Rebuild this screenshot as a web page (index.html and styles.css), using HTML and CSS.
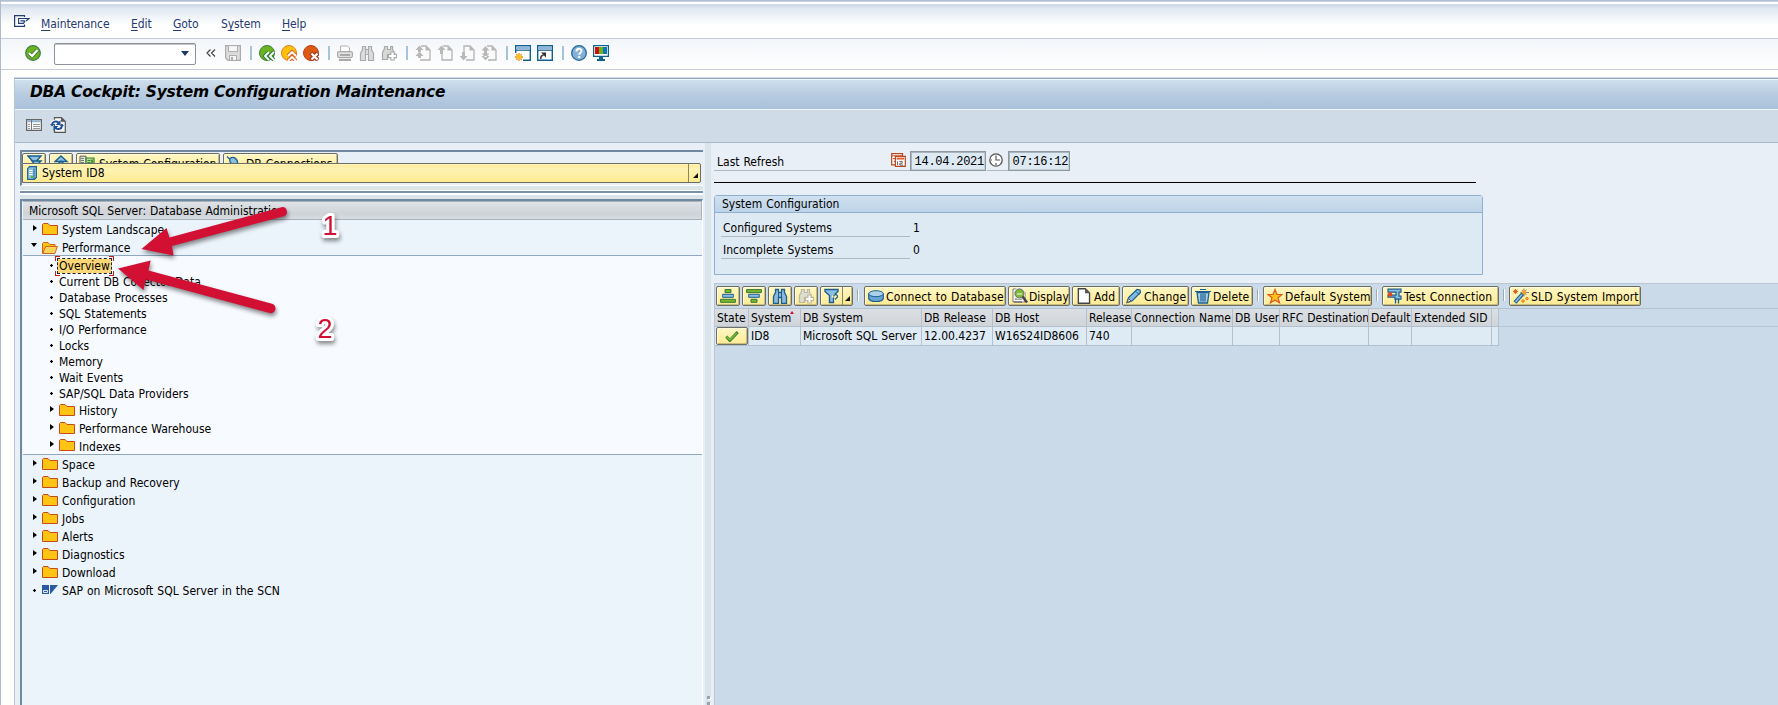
FILE: index.html
```
<!DOCTYPE html>
<html lang="en">
<head>
    <meta charset="UTF-8">
    <title>DBA Cockpit: System Configuration Maintenance</title>
    <link rel="stylesheet" href="styles.css">
</head>
<body>

<!-- icons -->
<svg class="defs" width="0" height="0">
    <symbol id="menu" viewBox="0 0 16 12"><path d="M10.500 2V.6H.6v10.800h9.900V9.500" fill="none" stroke="#253f75" stroke-width="1.200"/><path d="M9 3.500h6L12 6M9 3.500H4.600v4.900h4.900l1.500-2.500M6.500 5.900h4" fill="none" stroke="#253f75" stroke-width="1.100"/></symbol>
    <symbol id="ok" viewBox="0 0 16 16"><circle cx="8" cy="8" r="7.300" fill="#6cb320" stroke="#3c7f45" stroke-width="1.200"/><path d="M4 8l3 3 5.500-6" fill="none" stroke="#356d2b" stroke-width="3.800"/><path d="M4 8l3 3 5.500-6" fill="none" stroke="#fff" stroke-width="2.300"/></symbol>
    <symbol id="save" viewBox="0 0 16 16"><path d="M.6.600h14.800v14.800H3L.6 13z" fill="#dcdcdc" stroke="#aaa" stroke-width="1.200"/><path d="M3.500.600h9v6h-9zM4.500 10.500h7v5h-7z" fill="#f6f6f6" stroke="#aaa"/><path d="M6 12h2v3H6z" fill="#aaa"/></symbol>
    <symbol id="back" viewBox="0 0 16 16"><circle cx="8" cy="8" r="7.500" fill="#6cb320" stroke="#39823c"/><path d="M10 7l-4 4 4 4M15 7l-4 4 4 4" fill="none" stroke="#39823c" stroke-width="4"/><path d="M10 7l-4 4 4 4M15 7l-4 4 4 4" fill="none" stroke="#fff" stroke-width="1.800"/></symbol>
    <symbol id="exit" viewBox="0 0 16 16"><circle cx="8" cy="8" r="7.500" fill="#fdc30c" stroke="#e87b1c"/><path d="M7 11l4-4 4 4M7 16l4-4 4 4" fill="none" stroke="#dc6722" stroke-width="4"/><path d="M7 11l4-4 4 4M7 16l4-4 4 4" fill="none" stroke="#fff" stroke-width="1.800"/></symbol>
    <symbol id="cancel" viewBox="0 0 16 16"><circle cx="8" cy="8" r="7.500" fill="#dc5a14" stroke="#b9421a"/><path d="M8 8l7 7M15 8l-7 7" stroke="#a9381a" stroke-width="4.500"/><path d="M8.500 8.500l6 6M14.500 8.500l-6 6" stroke="#fff" stroke-width="2.200"/></symbol>
    <symbol id="print" viewBox="0 0 16 16"><path d="M3.500 7V1h7l2 2v4" fill="#fff" stroke="#b0b0b0"/><rect x=".6" y="6.600" width="14.800" height="6" rx="1.500" fill="#e0e0e0" stroke="#aaa" stroke-width="1.200"/><path d="M3 10h10M2 15h12" stroke="#aaa" stroke-width="2"/></symbol>
    <symbol id="find" viewBox="0 0 16 16"><path d="M3.500 1.500h3v3h3v-3h3v3l2 4v7h-5v-6h-3v6h-5v-7l2-4z" fill="currentColor" stroke="#aaa" stroke-width="1.200"/><path d="M6.500 5v4M9.500 5v4" stroke="#aaa"/></symbol>
    <symbol id="findb" viewBox="0 0 16 16"><path d="M3.500 1.500h3v3h3v-3h3v3l2 4v7h-5v-6h-3v6h-5v-7l2-4z" fill="#8db8df" stroke="#1a608f" stroke-width="1.300"/><path d="M6.500 5v4M9.500 5v4" stroke="#1a608f"/></symbol>
    <symbol id="findnext" viewBox="0 0 16 16"><path d="M3.500 1.500h3v3h3v-3h2v3l2 4v4h-4v-3h-3v5h-5v-7l2-4z" fill="#d5dad4" stroke="#aaa" stroke-width="1.200"/><path d="M11.500 6.500v9M7 11h9" stroke="#aaa" stroke-width="4.500"/><path d="M11.500 7.500v7M8 11h7" stroke="#fff" stroke-width="2.200"/></symbol>
    <symbol id="pfirst" viewBox="0 0 16 16"><path d="M6 1h5l4 4v10H5" fill="#fafafa" stroke="#b4b4b4" stroke-width="1.300"/><path d="M10.500 1v4.500H15z" fill="#b5b5b5"/><path d="M4.500.500l4 4.500H6v2H3V5H.5zM4.500 6.500l4 4.500H6v2H3v-2H.5z" fill="#b8b8b8"/></symbol>
    <symbol id="pup" viewBox="0 0 16 16"><path d="M6 1h5l4 4v10H5V9" fill="#fafafa" stroke="#b4b4b4" stroke-width="1.300"/><path d="M10.500 1v4.500H15z" fill="#b5b5b5"/><path d="M4.500.500l4 4.500H6v4H3V5H.5z" fill="#b8b8b8"/></symbol>
    <symbol id="pdown" viewBox="0 0 16 16"><path d="M5 8V1h6l4 4v10H7" fill="#fafafa" stroke="#b4b4b4" stroke-width="1.300"/><path d="M10.500 1v4.500H15z" fill="#b5b5b5"/><path d="M4.500 15.500l4-4.500H6V7H3v4H.5z" fill="#b8b8b8"/></symbol>
    <symbol id="plast" viewBox="0 0 16 16"><path d="M6 1h5l4 4v10H7" fill="#fafafa" stroke="#b4b4b4" stroke-width="1.300"/><path d="M10.500 1v4.500H15z" fill="#b5b5b5"/><path d="M4.500 15.500l4-4.500H.5zM4.500 1l4 4.500H6v3h2.500l-4 4-4-4H3v-3H.5z" fill="#b8b8b8"/></symbol>
    <symbol id="newsess" viewBox="0 0 16 16"><path d="M.7.700h14.600v14.600H8" fill="#fff"/><path d="M.7 8V.7h14.600v14.600H8" fill="none" stroke="#11618f" stroke-width="1.400"/><path d="M1.400 1.400h13.200v3.200H1.400z" fill="#8fb5dc"/><path d="M0 5.300h15" stroke="#11618f"/><path d="M4 8v8M0 12h8M1.200 9.200l5.600 5.600M6.800 9.200l-5.600 5.600" stroke="#ed8c16" stroke-width="1.300"/><circle cx="4" cy="12" r="2.300" fill="#fbc21a"/></symbol>
    <symbol id="shortcut" viewBox="0 0 16 16"><path d="M.7.700h14.600v14.600H.7z" fill="#fff" stroke="#11618f" stroke-width="1.400"/><path d="M1.400 1.400h13.200v3.200H1.400z" fill="#8fb5dc"/><path d="M0 5.300h15" stroke="#11618f"/><path d="M4 14c-.5-2 .5-3.500 2.500-4" fill="none" stroke="#333" stroke-width="1.500"/><path d="M4 7.500h5v5z" fill="#333"/></symbol>
    <symbol id="help" viewBox="0 0 16 16"><circle cx="8" cy="8" r="7.300" fill="#85b0da" stroke="#1f6796" stroke-width="1.300"/><path d="M5.500 6.500c0-3.500 5-3.500 5-.500 0 1.700-2.300 1.700-2.300 3.800M8.200 11v2" fill="none" stroke="#fff" stroke-width="1.900"/></symbol>
    <symbol id="layout" viewBox="0 0 16 16"><path d="M.6.600h14.800v10.800H.6z" fill="#fff" stroke="#11618f" stroke-width="1.300"/><path d="M2 2h4v7H2z" fill="#d10a0a"/><path d="M6 2h4v7H6z" fill="#71b317"/><path d="M10 2h4v7h-4z" fill="#0c77bd"/><path d="M6 12h4v2h2v2H4v-2h2z" fill="#11618f"/></symbol>
    <symbol id="list" viewBox="0 0 16 12"><path d="M.6.600h14.800v10.800H.6z" fill="#f5f7f8" stroke="#666" stroke-width="1.200"/><path d="M1.200 1.200h13.600v2H1.200z" fill="#91b3d2"/><path d="M5.500 1v10" stroke="#777"/><path d="M2 5.500h2M2 7.500h2M2 9.500h2M7 5.500h7M7 7.500h7M7 9.500h7" stroke="#999"/></symbol>
    <symbol id="refresh" viewBox="0 0 16 16"><path d="M4.500.700h7l3.800 3.800v10.800H4.500z" fill="#f7f7f7" stroke="#555" stroke-width="1.200"/><path d="M11 .7v4h4.500z" fill="#555"/><path d="M2 7.500c.5-3 4-4 6.500-2M12 8.500c-.5 3-4 4-6.500 2" fill="none" stroke="#fff" stroke-width="4"/><path d="M2 7.500c.5-3 4-4 6.500-2M12 9c-.5 3-4 4-6.500 2" fill="none" stroke="#1f4f97" stroke-width="2"/><path d="M10.500 3v5H5.700zM3.500 14V9h5zM0 7h4.500L2 9.500zM9.500 9H14l-2-2.500z" fill="#1f4f97"/></symbol>
    <symbol id="folder" viewBox="0 0 16 12"><path d="M.5 11.500V1.500L1.500.5h4.500l2 2h7.500v9z" fill="#fdc414" stroke="#cb4a1c"/></symbol>
    <symbol id="folderopen" viewBox="0 0 16 12"><path d="M.5 11.500V1.500L1.500.5h4.500l2 2h5v2" fill="#fdc414" stroke="#d0641c"/><path d="M.7 11.500l3-7h11.700l-2.500 7z" fill="#fed45a" stroke="#d0641c"/></symbol>
    <symbol id="sap" viewBox="0 0 16 9"><path d="M0 0h7v9H0zM8 0h8L8.500 9H8z" fill="#2a5aa3"/><path d="M1.500 5.500h4v2h-4z" stroke="#dfe9f5" fill="#2a5aa3"/></symbol>
    <symbol id="server" viewBox="0 0 10 14"><path d="M.6 2.600L2.600.6h6.800v10.800l-2 2H.6z" fill="#8fc1e3" stroke="#1a6596" stroke-width="1.200"/><path d="M2 4.500h3.500M2 6.500h3.500M2 8.500h3.500" stroke="#fff"/><path d="M7 2.500v11" stroke="#1a6596"/><path d="M4 10h2v2H4z" fill="#62b41f"/></symbol>
    <symbol id="expand" viewBox="0 0 16 16"><path d="M1 1h13L9.500 6H5.500zM5 6h9l-5 5z" fill="#92c1e3" stroke="#195f8f" stroke-width="1.400"/></symbol>
    <symbol id="collapse" viewBox="0 0 16 16"><path d="M7 1l6 5.500H1zM7 6l6 6H1z" fill="#92c1e3" stroke="#195f8f" stroke-width="1.400"/></symbol>
    <symbol id="servers" viewBox="0 0 16 15"><path d="M1 .7h6v12H1z" fill="#e9eadb" stroke="#555"/><path d="M2 3h3M2 5h3M2 7h3" stroke="#777"/><path d="M7 2.500h8v12H7z" fill="#b8d88f" stroke="#378133" stroke-width="1.200"/><path d="M8.500 5h3M8.500 7h3" stroke="#378133"/><path d="M12 4h2v4h-2z" fill="#419c35"/></symbol>
    <symbol id="plug" viewBox="0 0 16 15"><path d="M1 1l3 3M4 3c4-3 8 1 7.500 5l-3 1.500C5 9 3 6 4 3zM10 8l5 4-2 3" fill="#8fbce0" stroke="#1a6393" stroke-width="1.300"/></symbol>
    <symbol id="cal" viewBox="0 0 16 15"><path d="M.7.700h11.600v12H.7z" fill="#fff" stroke="#b64822" stroke-width="1.300"/><path d="M1 3h11M2 6h3M3 9h2" stroke="#b64822"/><path d="M4.700 3.700h10.600v10.600H4.700z" fill="#fff" stroke="#b64822" stroke-width="1.300"/><path d="M6 5h8v2H6z" fill="#df5a25"/><path d="M7 9v4M9 9h3v2H9.500v2H13" fill="none" stroke="#555"/></symbol>
    <symbol id="clock" viewBox="0 0 14 14"><circle cx="7" cy="7" r="6.200" fill="#fff" stroke="#555" stroke-width="1.300"/><path d="M7 2.500V7h4M7 10v2M2 7h1" fill="none" stroke="#555" stroke-width="1.200"/></symbol>
    <symbol id="asc" viewBox="0 0 16 14"><path d="M5 .6h6v3H5z" fill="#78b928" stroke="#39773a"/><path d="M2.700 5.300h10.600v3H2.700z" fill="#8dbce4" stroke="#1a608f"/><path d="M.6 10.300h14.800v3H.6z" fill="#78b928" stroke="#39773a"/></symbol>
    <symbol id="desc" viewBox="0 0 16 14"><path d="M5 10.300h6v3H5z" fill="#78b928" stroke="#39773a"/><path d="M2.700 5.300h10.600v3H2.700z" fill="#8dbce4" stroke="#1a608f"/><path d="M.6.600h14.800v3H.6z" fill="#78b928" stroke="#39773a"/></symbol>
    <symbol id="filter" viewBox="0 0 16 15"><path d="M1 1h13v2L9.500 7v7h-4V7L1 3z" fill="#8dbce4" stroke="#1a608f" stroke-width="1.400"/><path d="M9 9c0-3 5-3 4.500 0l-2 2v2" fill="none" stroke="#fdf0ac" stroke-width="2.500"/><path d="M9.500 8c.5-3 4.500-2 4 .5L11 11" fill="none" stroke="#1a608f" stroke-width="1.200"/></symbol>
    <symbol id="db" viewBox="0 0 16 12"><path d="M.7 3.500v5c1 4 13.600 4 14.600 0v-5" fill="#6ba4d2" stroke="#1a608f" stroke-width="1.200"/><ellipse cx="8" cy="3.700" rx="7.300" ry="3" fill="#add0ec" stroke="#1a608f"/></symbol>
    <symbol id="display" viewBox="0 0 16 16"><path d="M1 1h9l3 3v10H1z" fill="#fff" stroke="#777"/><path d="M3 11h7M2 14h8" stroke="#777" stroke-width="1.500"/><circle cx="7.500" cy="5.500" r="4.300" fill="#7fba35" stroke="#fff" stroke-width="3"/><circle cx="7.500" cy="5.500" r="4.600" fill="#7fba35" stroke="#666"/><path d="M5 6h5" stroke="#fff"/><path d="M10.500 8.500l4.500 6" stroke="#444" stroke-width="2.500"/></symbol>
    <symbol id="new" viewBox="0 0 12 15"><path d="M.7.700h6.500l4 4v9.600H.7z" fill="#fff" stroke="#444" stroke-width="1.300"/><path d="M7 1v4h4z" fill="#555"/></symbol>
    <symbol id="pencil" viewBox="0 0 16 15"><path d="M1 14l1.500-5L11 1l3 .5.500 2.500L6 12.500z" fill="#86b9e0" stroke="#1a608f" stroke-width="1.200"/><path d="M1 14l1.500-4 2.500 2.500z" fill="#fff" stroke="#555"/><path d="M10 3l3 3" stroke="#1a608f"/></symbol>
    <symbol id="trash" viewBox="0 0 16 15"><path d="M2 4h12l-1.500 10.500h-9z" fill="#a8cde9" stroke="#1a608f" stroke-width="1.300"/><path d="M0 3h16M5 1h6M6 5v8M8 5v8M10 5v8" stroke="#1a608f" stroke-width="1.200"/></symbol>
    <symbol id="star" viewBox="0 0 16 15"><path d="M8 1l2 5h5l-4 3.300 1.500 5L8 11.500l-4.500 2.800 1.500-5L1 6h5z" fill="#fdc31a" stroke="#da5a20" stroke-width="1.200"/></symbol>
    <symbol id="test" viewBox="0 0 16 15"><path d="M2 .7h13v3h-2v4h2v3H9v-2H2v-2h8v-3H2z" fill="#8dbce4" stroke="#1a608f" stroke-width="1.200"/><path d="M12.500 10v5M9.500 10v5" stroke="#1a608f" stroke-width="1.300"/><circle cx="4" cy="6" r="2.300" fill="#e04a1c"/></symbol>
    <symbol id="wand" viewBox="0 0 16 15"><path d="M2 14l8-9" stroke="#1a608f" stroke-width="4"/><path d="M2.500 13.500L9 6" stroke="#8dbce4" stroke-width="1.700"/><path d="M11 0v8M7.500 4H16M9 1.500l4.500 5M13.500 1l-4 5" stroke="#777" stroke-width=".9"/><circle cx="11" cy="4" r="2" fill="#f9a01b"/><path d="M2.500.500v5M0 3h5M.7 1.200l3.600 3.600M4.300 1.200L.7 4.800" stroke="#d96622"/><circle cx="10" cy="12.500" r="1.300" fill="#fdc31a" stroke="#e87b1c"/><circle cx="14" cy="10" r="1.200" fill="#fdc31a" stroke="#e87b1c"/></symbol>
    <symbol id="check" viewBox="0 0 16 12"><path d="M1.500 6l4 4.500L14.500 1" fill="none" stroke="#39773a" stroke-width="3.400"/><path d="M2 6.300l3.600 3.500L13.500 2" fill="none" stroke="#76bd2b" stroke-width="2"/></symbol>
</svg>

<div class="window">
    <div class="menubar">
        <svg class="menu-icon"><use href="#menu"/></svg>
        <span class="m1"><u>M</u>aintenance</span>
        <span class="m2"><u>E</u>dit</span>
        <span class="m3"><u>G</u>oto</span>
        <span class="m4">S<u>y</u>stem</span>
        <span><u>H</u>elp</span>
    </div>

    <div class="toolbar">
        <svg class="i ok"><use href="#ok"/></svg>
        <div class="command"><i></i></div>
        <svg class="chev" viewBox="0 0 10 8"><path d="M4.500.500L1 4l3.500 3.500M9 .5L5.500 4 9 7.500" fill="none" stroke="#444" stroke-width="1.200"/></svg>
        <svg class="i"><use href="#save"/></svg>
        <b class="sep"></b>
        <svg class="i"><use href="#back"/></svg>
        <svg class="i g"><use href="#exit"/></svg>
        <svg class="i g"><use href="#cancel"/></svg>
        <b class="sep"></b>
        <svg class="i"><use href="#print"/></svg>
        <svg class="i g grey"><use href="#find"/></svg>
        <svg class="i g"><use href="#findnext"/></svg>
        <b class="sep"></b>
        <svg class="i"><use href="#pfirst"/></svg>
        <svg class="i g"><use href="#pup"/></svg>
        <svg class="i g"><use href="#pdown"/></svg>
        <svg class="i g"><use href="#plast"/></svg>
        <b class="sep"></b>
        <svg class="i"><use href="#newsess"/></svg>
        <svg class="i g"><use href="#shortcut"/></svg>
        <b class="sep"></b>
        <svg class="i"><use href="#help"/></svg>
        <svg class="i g"><use href="#layout"/></svg>
    </div>

    <div class="screen">
        <div class="title"><span>DBA Cockpit: System Configuration Maintenance</span></div>
        <div class="apptools">
            <svg class="list"><use href="#list"/></svg>
            <svg class="i"><use href="#refresh"/></svg>
        </div>

        <div class="panes">
            <div class="left">
                <div class="sysbox">
                    <div class="cutbtns">
                        <div class="btn c1"><svg class="i"><use href="#expand"/></svg></div>
                        <div class="btn c2"><svg class="i"><use href="#collapse"/></svg></div>
                        <div class="btn c3"><svg class="i"><use href="#servers"/></svg><span>System Configuration</span></div>
                        <div class="btn c4"><svg class="i"><use href="#plug"/></svg><span>DB Connections</span></div>
                    </div>
                    <div class="syssel">
                        <svg class="server"><use href="#server"/></svg>
                        <span>System ID8</span>
                        <div class="drop"></div>
                    </div>
                </div>
                <div class="gapline"></div>
                <div class="treebox">
                    <div class="treehead"><span>Microsoft SQL Server: Database Administration</span></div>
                    <div class="row"><i class="tri"></i><svg class="folder"><use href="#folder"/></svg><span>System Landscape</span></div>
                    <div class="row perf"><i class="tri open"></i><svg class="folder"><use href="#folderopen"/></svg><span>Performance</span></div>
                    <div class="sub">
                        <div class="row leaf first"><i class="dot"></i><span class="selected">Overview</span></div>
                        <div class="row leaf"><i class="dot"></i><span>Current DB Collector Data</span></div>
                        <div class="row leaf"><i class="dot"></i><span>Database Processes</span></div>
                        <div class="row leaf"><i class="dot"></i><span>SQL Statements</span></div>
                        <div class="row leaf"><i class="dot"></i><span>I/O Performance</span></div>
                        <div class="row leaf"><i class="dot"></i><span>Locks</span></div>
                        <div class="row leaf"><i class="dot"></i><span>Memory</span></div>
                        <div class="row leaf"><i class="dot"></i><span>Wait Events</span></div>
                        <div class="row leaf"><i class="dot"></i><span>SAP/SQL Data Providers</span></div>
                        <div class="row"><i class="tri"></i><svg class="folder"><use href="#folder"/></svg><span>History</span></div>
                        <div class="row"><i class="tri"></i><svg class="folder"><use href="#folder"/></svg><span>Performance Warehouse</span></div>
                        <div class="row last"><i class="tri"></i><svg class="folder"><use href="#folder"/></svg><span>Indexes</span></div>
                    </div>
                    <div class="row"><i class="tri"></i><svg class="folder"><use href="#folder"/></svg><span>Space</span></div>
                    <div class="row"><i class="tri"></i><svg class="folder"><use href="#folder"/></svg><span>Backup and Recovery</span></div>
                    <div class="row"><i class="tri"></i><svg class="folder"><use href="#folder"/></svg><span>Configuration</span></div>
                    <div class="row"><i class="tri"></i><svg class="folder"><use href="#folder"/></svg><span>Jobs</span></div>
                    <div class="row"><i class="tri"></i><svg class="folder"><use href="#folder"/></svg><span>Alerts</span></div>
                    <div class="row"><i class="tri"></i><svg class="folder"><use href="#folder"/></svg><span>Diagnostics</span></div>
                    <div class="row"><i class="tri"></i><svg class="folder"><use href="#folder"/></svg><span>Download</span></div>
                    <div class="row"><i class="dot"></i><svg class="sap"><use href="#sap"/></svg><span>SAP on Microsoft SQL Server in the SCN</span></div>
                </div>
            </div>

            <div class="splitter"><i></i><i></i></div>

            <div class="right">
                <div class="refresh">
                    <div class="rlabel"><span>Last Refresh</span><svg class="cal"><use href="#cal"/></svg></div>
                    <div class="field date">14.04.2021</div>
                    <div class="clockbox"><svg class="clock"><use href="#clock"/></svg></div>
                    <div class="field time">07:16:12</div>
                </div>

                <div class="group">
                    <div class="ghead">System Configuration</div>
                    <div class="grow"><div>Configured Systems</div><span>1</span></div>
                    <div class="grow"><div>Incomplete Systems</div><span>0</span></div>
                </div>

                <div class="alv">
                    <div class="alvtools">
                        <div class="btn sq"><svg class="bar"><use href="#asc"/></svg></div>
                        <div class="btn sq"><svg class="bar"><use href="#desc"/></svg></div>
                        <div class="btn sq"><svg class="i"><use href="#findb"/></svg></div>
                        <div class="btn sq off"><svg class="i"><use href="#findnext"/></svg></div>
                        <div class="btn split"><svg class="i"><use href="#filter"/></svg><div class="drop"></div></div>
                        <b class="bsep wide"></b>
                        <div class="btn w1"><svg class="i"><use href="#db"/></svg><span>Connect to Database</span></div>
                        <div class="btn w2"><svg class="i"><use href="#display"/></svg><span>Display</span></div>
                        <div class="btn w3"><svg class="i"><use href="#new"/></svg><span>Add</span></div>
                        <div class="btn w4"><svg class="i"><use href="#pencil"/></svg><span>Change</span></div>
                        <div class="btn w5"><svg class="i"><use href="#trash"/></svg><span>Delete</span></div>
                        <b class="bsep"></b>
                        <div class="btn w6"><svg class="i"><use href="#star"/></svg><span>Default System</span></div>
                        <b class="bsep"></b>
                        <div class="btn w7"><svg class="i"><use href="#test"/></svg><span>Test Connection</span></div>
                        <b class="bsep"></b>
                        <div class="btn w8"><svg class="i"><use href="#wand"/></svg><span>SLD System Import</span></div>
                    </div>
                    <div class="grid">
                        <table>
                            <colgroup>
                                <col class="k1"><col class="k2"><col class="k3"><col class="k4"><col class="k5"><col class="k6">
                                <col class="k7"><col class="k8"><col class="k9"><col class="k10"><col class="k11"><col class="k12">
                            </colgroup>
                            <tr>
                                <th>State</th><th class="sorted">System</th><th>DB System</th><th>DB Release</th><th>DB Host</th><th>Release</th>
                                <th>Connection Name</th><th>DB User</th><th>RFC Destination</th><th>Default</th><th>Extended SID</th><th></th>
                            </tr>
                            <tr>
                                <td class="state"><div class="btn"><svg class="check"><use href="#check"/></svg></div></td>
                                <td>ID8</td><td>Microsoft SQL Server</td><td>12.00.4237</td><td>W16S24ID8606</td><td>740</td>
                                <td></td><td></td><td></td><td></td><td></td><td></td>
                            </tr>
                        </table>
                    </div>
                </div>
            </div>
        </div>
    </div>
</div>

<!-- callouts -->
<svg class="notes" width="360" height="180" viewBox="0 180 360 180">
    <g fill="#d21034">
        <path d="M141.500 249L166.500 228 169.500 237.500 281.500 207.200A4.700 4.700 0 0 1 284 216.200L172 246 173.500 255.500z"/>
        <path d="M118 268.500L150.700 260.500 148.500 270.500 272 303.800A4.700 4.700 0 0 1 269.500 313L146 279.500 143.500 290z"/>
    </g>
    <g class="num">
        <text x="322.500" y="235">1</text>
        <text x="317.500" y="338">2</text>
    </g>
</svg>

</body>
</html>
```
FILE: styles.css
```
* {
    box-sizing: border-box;
}

body {
    margin: 0;
    height: 705px;
    overflow: hidden;
    font-family: "DejaVu Sans Condensed", "DejaVu Sans", sans-serif;
    font-size: 12px;
    letter-spacing: 0;
    word-spacing: 0.5px;
    color: #000;
    white-space: nowrap;
}

svg {
    display: block;
    flex: none;
}

.defs {
    position: absolute;
}

.i {
    width: 16px;
    height: 16px;
}

.window {
    height: 705px;
    display: flex;
    flex-direction: column;
    border-left: 1px solid #b0bccb;
    border-top: 1px solid #b0bfd2;
    background: #fff;
}

/* menu + standard toolbar */
.menubar {
    height: 38px;
    flex: none;
    display: flex;
    align-items: center;
    padding: 9px 0 0 13px;
    border-bottom: 1px solid #c5ccda;
    background: linear-gradient(#c6d2e1 0, #c6d2e1 1px, #fff 1px, #fff 3px, #c9d6e6 3px, #e2e9f2 8px, #fff 24px);
    color: #253a70;
    letter-spacing: -0.1px;
}

.menubar u {
    text-underline-offset: 2px;
}

.menu-icon {
    width: 16px;
    height: 12px;
    margin: -7px 11px 0 0;
}

.m1 { width: 90px; }
.m2 { width: 42px; }
.m3 { width: 48px; }
.m4 { width: 61px; }

.toolbar {
    height: 31px;
    flex: none;
    display: flex;
    align-items: center;
    padding: 0 0 2px 24px;
    border-bottom: 1px solid #c5ccda;
    background: linear-gradient(#f3f6fa, #fff);
}

.ok {
    margin-right: 13px;
}

.command {
    width: 142px;
    height: 22px;
    margin: 1px 10px 0 0;
    border: 1px solid #8e9296;
    border-radius: 2px;
    box-shadow: inset 0 1px 0 #c4c6c8;
    background: #fff;
    display: flex;
    align-items: center;
    justify-content: flex-end;
    padding-right: 6px;
}

.command i {
    border: 4.5px solid transparent;
    border-top: 5px solid #1d3768;
    border-bottom: 0;
}

.chev {
    width: 10px;
    height: 8px;
    margin-right: 9px;
}

.g {
    margin-left: 6px;
}

.grey {
    color: #dcdcdc;
}

.sep {
    width: 18px;
    height: 14px;
    background: linear-gradient(#a6c3dc, #a6c3dc) 9px 0 / 2px 14px no-repeat;
}

.screen {
    flex: 1;
    margin: 8px 0 0 13px;
    border-left: 1px solid #b9c8d6;
    border-top: 1px solid #93a8c2;
    display: flex;
    flex-direction: column;
    box-shadow: 0 -1px 0 #d3dce7;
    background: #e8eff7;
}

.title {
    height: 31px;
    flex: none;
    padding-left: 15px;
    border-top: 1px solid #f1f6fa;
    border-bottom: 1px solid #f1f6fa;
    line-height: 25px;
    background: linear-gradient(#cfdfec, #b7cce1 50%, #aac1db);
    font-family: "DejaVu Sans", sans-serif;
    font-size: 15.5px;
    font-weight: bold;
    font-style: italic;
    letter-spacing: -0.25px;
    word-spacing: 0;
}

.apptools {
    height: 33px;
    flex: none;
    display: flex;
    align-items: center;
    padding: 0 0 3px 11px;
    border-bottom: 1px solid #a7bacd;
    background: #cfdce7;
}

.list {
    width: 16px;
    height: 12px;
    margin-right: 8px;
}

.panes {
    flex: 1;
    display: flex;
}

/* left side */
.left {
    width: 690px;
    padding: 7px 2px 0 5px;
    display: flex;
    flex-direction: column;
    background: #e8eff7;
}

.sysbox {
    height: 36px;
    flex: none;
    border-top: 2px solid #7088a0;
    border-left: 2px solid #7088a0;
    border-bottom: 1px solid #fff;
}

.cutbtns {
    height: 11px;
    display: flex;
    overflow: hidden;
    padding-top: 1px;
}

.btn {
    height: 20px;
    flex: none;
    display: flex;
    align-items: center;
    padding-left: 4px;
    border: 1px solid #6e6d63;
    border-radius: 2px;
    box-shadow: inset 1px 1px 0 #fffbd9, inset -1px -1px 0 #c9bb7d;
    background: linear-gradient(#fff7c3, #fdea94);
}

.btn span {
    padding-top: 1px;
}

.cutbtns .i {
    margin-right: 4px;
}

.c1 { width: 24px; margin-right: 3px; }
.c2 { width: 24px; margin-right: 3px; }
.c3 { width: 144px; padding-left: 2px; margin-right: 3px; }
.c4 { width: 115px; padding-left: 2px; }

.syssel {
    width: 679px;
    height: 20px;
    display: flex;
    align-items: center;
    padding-left: 4px;
    border: 1px solid #6e6d63;
    border-radius: 0 2px 2px 0;
    box-shadow: inset 0 1px 0 #fff6bd;
    background: linear-gradient(#ffec9a, #fdf2b4 30%, #feea8f);
}

.server {
    width: 10px;
    height: 14px;
    margin-right: 5px;
}

.drop {
    width: 12px;
    height: 18px;
    margin-left: auto;
    border-left: 1px solid #8b855f;
    display: flex;
    align-items: flex-end;
    padding: 0 0 4px 4px;
}

.drop::after {
    content: "";
    border-left: 5px solid transparent;
    border-bottom: 5px solid #111;
}

.gapline {
    height: 13px;
    flex: none;
    border-top: 1px solid #dae5eb;
    background: linear-gradient(#dae5eb 0, #dae5eb 3px, #fff 3px, #fff 4px, #7a92a8 4px, #7a92a8 6px, #fff 6px, #fff 8px, #dae5eb 8px);
}

.treebox {
    flex: 1;
    border-top: 2px solid #7088a0;
    border-left: 2px solid #7088a0;
    border-right: 1px solid #fff;
    padding-left: 1px;
    background: #ebf3fb;
}

.treehead {
    width: 679px;
    height: 19px;
    padding-left: 6px;
    line-height: 18px;
    border: 1px solid #a8b2ba;
    border-left: 0;
    background: linear-gradient(#dfe2e6, #ced3d8 70%, #d9dde1);
}

.row {
    height: 18px;
    display: flex;
    align-items: center;
    padding: 2px 0 0 9px;
}

.perf {
    height: 17px;
}

.folder {
    width: 16px;
    height: 12px;
    margin: -3px 4px 0 0;
}

.perf .folder {
    margin-top: 0;
}

.sap {
    width: 16px;
    height: 9px;
    margin: -4px 4px 0 0;
}

.tri {
    width: 10px;
    height: 8px;
    margin-top: -3px;
}

.tri::before {
    content: "";
    display: block;
    width: 0;
    border: 3.5px solid transparent;
    border-left: 4px solid #000;
    border-right: 0;
    margin-left: 1px;
}

.tri.open::before {
    margin: 1px 0 0 -1px;
    border: 3.5px solid transparent;
    border-top: 4px solid #000;
    border-bottom: 0;
}

.dot {
    width: 10px;
    height: 3px;
    margin-top: -1px;
    background: radial-gradient(circle, #000 1px, transparent 1.5px) 1px 0 / 3px 3px no-repeat;
}

.sub {
    width: 679px;
    border-top: 1px solid #8fa8c0;
    border-bottom: 1px solid #8fa8c0;
    background: #f7faff;
}

.sub .row {
    padding-left: 26px;
}

.sub .leaf {
    height: 16px;
}

.sub .first {
    height: 17px;
}

.sub .last {
    height: 17px;
}

.selected {
    position: relative;
    height: 14px;
    line-height: 14px;
    margin-left: -1px;
    padding: 0 1px;
    background: #fbd775;
    outline: 1px dashed #222;
}

.selected::before {
    content: "";
    position: absolute;
    left: -3px;
    top: -3px;
    right: -3px;
    bottom: -3px;
    --r: linear-gradient(#d21818, #d21818);
    background: var(--r) 0 0 / 5px 1px, var(--r) 0 0 / 1px 5px, var(--r) 100% 0 / 5px 1px, var(--r) 100% 0 / 1px 5px,
        var(--r) 0 100% / 5px 1px, var(--r) 0 100% / 1px 5px, var(--r) 100% 100% / 5px 1px, var(--r) 100% 100% / 1px 5px;
    background-repeat: no-repeat;
}

.splitter {
    width: 6px;
    display: flex;
    flex-direction: column;
    justify-content: flex-end;
    align-items: center;
    gap: 3px;
    background: #dae5eb;
}

.splitter i {
    width: 3px;
    height: 3px;
    background: #93a3b3;
    box-shadow: 1px 1px 0 #fff;
}

/* right side */
.right {
    flex: 1;
    padding: 8px 0 0 3px;
    display: flex;
    flex-direction: column;
}

.refresh {
    width: 762px;
    height: 32px;
    flex: none;
    display: flex;
    align-items: flex-start;
    border-bottom: 1px solid #000;
}

.rlabel {
    width: 196px;
    height: 20px;
    display: flex;
    justify-content: space-between;
    align-items: center;
    padding: 2px 4px 0 3px;
    border-bottom: 1px solid #b2b8bf;
}

.cal {
    width: 15px;
    height: 14px;
    margin-top: -4px;
}

.field {
    height: 20px;
    border: 1px solid #8f989f;
    box-shadow: inset 1px 1px 0 #a9b4bc, inset -1px -1px 0 #c3d0d8;
    background: #deeaf3;
    font-family: "Liberation Mono", monospace;
    font-size: 12px;
    letter-spacing: -0.25px;
    line-height: 20px;
    padding-left: 3.5px;
}

.date { width: 76px; }
.time { width: 62px; }

.clockbox {
    width: 21px;
    height: 20px;
    margin-left: 1px;
    padding: 2px 0 0 2px;
    border-bottom: 1px solid #b2b8bf;
}

.clock {
    width: 14px;
    height: 14px;
}

.group {
    width: 769px;
    height: 80px;
    flex: none;
    margin-top: 12px;
    border: 1px solid #8fb0d0;
    border-radius: 3px 3px 0 0;
    background: #deeaf3;
}

.ghead {
    height: 17px;
    margin-bottom: 2px;
    padding-left: 7px;
    line-height: 17px;
    border-bottom: 1px solid #8fb0d0;
    background: linear-gradient(#d0e1f0, #bdd3e8);
}

.grow {
    height: 22px;
    display: flex;
    align-items: flex-end;
    padding-left: 6px;
}

.grow div {
    width: 189px;
    height: 19px;
    padding-left: 2px;
    line-height: 20px;
    border-bottom: 1px solid #b2b8bf;
}

.grow span {
    height: 19px;
    padding-left: 3px;
    line-height: 20px;
}

.alv {
    flex: 1;
    margin-top: 8px;
    border-top: 1px solid #b8c6d6;
    border-left: 1px solid #b8c6d6;
    background: #cbdae8;
}

.alvtools {
    height: 25px;
    display: flex;
    gap: 2px;
    padding: 2px 0 0 1px;
    border-bottom: 1px solid #b5c3d0;
    letter-spacing: 0.15px;
}

.alvtools .btn {
    padding-left: 3px;
}

.alvtools span {
    padding: 2px 0 0 2px;
}

.sq { width: 24px; }
.off .i { opacity: 0.8; }
.split { width: 33px; }
.split .drop { width: 10px; padding-left: 2px; }
.w1 { width: 142px; }
.w2 { width: 62px; letter-spacing: 0; }
.w2 span { padding-left: 1px; }
.w3 { width: 48px; }
.w4 { width: 67px; }
.w5 { width: 62px; }
.w6 { width: 109px; }
.w7 { width: 117px; }
.w8 { width: 132px; }

.bar {
    width: 16px;
    height: 14px;
}

.bsep {
    width: 6px;
    height: 12px;
    margin-top: 3px;
    background: linear-gradient(#9eabb8, #9eabb8) 2px 0 / 1px 12px no-repeat, linear-gradient(#fff, #fff) 3px 0 / 1px 12px no-repeat;
}

.wide {
    width: 7px;
}

.grid {
    background: linear-gradient(#b8c6d4, #b8c6d4) 0 17px / 100% 1px no-repeat;
}

table {
    width: 784px;
    table-layout: fixed;
    border-collapse: separate;
    border-spacing: 0;
}

th, td {
    height: 18px;
    padding: 1px 0 0 2px;
    font-weight: normal;
    text-align: left;
    line-height: 16px;
    border-right: 1px solid #b3c0cd;
    border-bottom: 1px solid #b3c0cd;
    overflow: hidden;
}

th {
    position: relative;
    background: linear-gradient(#dcdfe3, #d0d5da);
}

td {
    height: 19px;
    padding: 0 0 1px 2px;
    background: #deeaf4;
}

.sorted::after {
    content: "";
    position: absolute;
    right: 6px;
    top: 2px;
    border: 2.5px solid transparent;
    border-bottom: 3px solid #c8102e;
    border-top: 0;
}

.state {
    padding: 0 0 0 1px;
}

.state .btn {
    width: 32px;
    height: 18px;
    padding-left: 8px;
}

.check {
    width: 14px;
    height: 11px;
}

.k1 { width: 34px; }
.k2 { width: 52px; }
.k3 { width: 121px; }
.k4 { width: 71px; }
.k5 { width: 94px; }
.k6 { width: 45px; }
.k7 { width: 101px; }
.k8 { width: 47px; }
.k9 { width: 89px; }
.k10 { width: 43px; }
.k11 { width: 80px; }
.k12 { width: 7px; }

/* callouts lie over the tree */
.notes {
    position: absolute;
    left: 0;
    top: 180px;
    filter: drop-shadow(1px 3px 2px rgba(0, 0, 0, 0.45));
}

.num text {
    font-family: "Liberation Sans", sans-serif;
    font-size: 27px;
    fill: #d21034;
    stroke: #fff;
    stroke-width: 6px;
    stroke-linejoin: round;
    paint-order: stroke;
}
```
